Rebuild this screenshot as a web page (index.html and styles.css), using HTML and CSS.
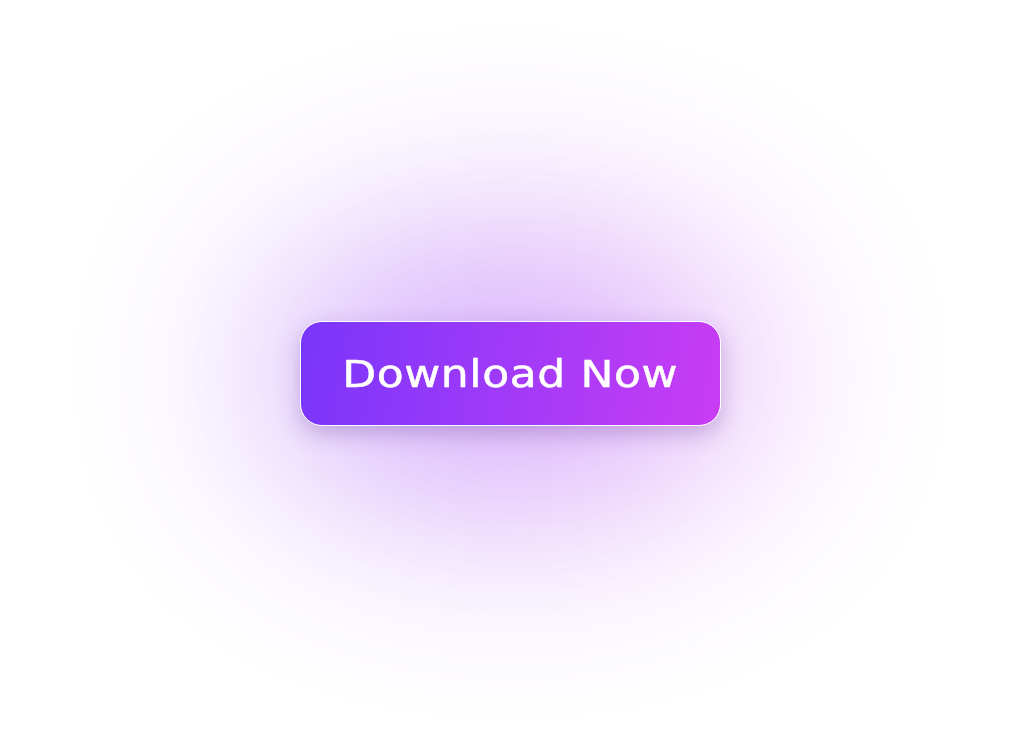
FILE: index.html
```html
<!DOCTYPE html>
<html>
<head>
<meta charset="utf-8">
<link rel="stylesheet" href="styles.css">
</head>
<body>
<main class="stage">
  <div class="glow"></div>
  <button class="cta"><span class="cta-label">Download Now</span></button>
</main>
</body>
</html>
```
FILE: styles.css
```css
html, body {
  margin: 0;
  padding: 0;
  background: #ffffff;
}
.stage {
  position: relative;
  width: 1020px;
  height: 744px;
  display: flex;
  align-items: center;
  justify-content: center;
  overflow: hidden;
}
.glow {
  position: absolute;
  left: 260px;
  top: 228px;
  width: 500px;
  height: 290px;
  border-radius: 50%;
  background: linear-gradient(90deg, #8a3cf8, #c045f0);
  filter: blur(100px);
  opacity: 0.42;
}
.cta {
  position: relative;
  box-sizing: border-box;
  width: 421px;
  height: 105px;
  margin-top: 2px;
  border: 1.5px solid #ffffff;
  border-radius: 22px;
  background: linear-gradient(100deg, #7935fb 0%, #a13af8 50%, #c93cf4 100%);
  box-shadow: 0 8px 22px rgba(90, 40, 140, 0.28);
  display: flex;
  align-items: center;
  justify-content: center;
  padding: 0;
  cursor: pointer;
}
.cta-label {
  font-family: "DejaVu Sans", sans-serif;
  font-size: 37px;
  font-weight: 400;
  color: #ffffff;
  letter-spacing: 0.5px;
  -webkit-text-stroke: 0.5px #ffffff;
  display: inline-block;
  transform: scaleX(1.19);
  margin-top: 2px;
}
```
